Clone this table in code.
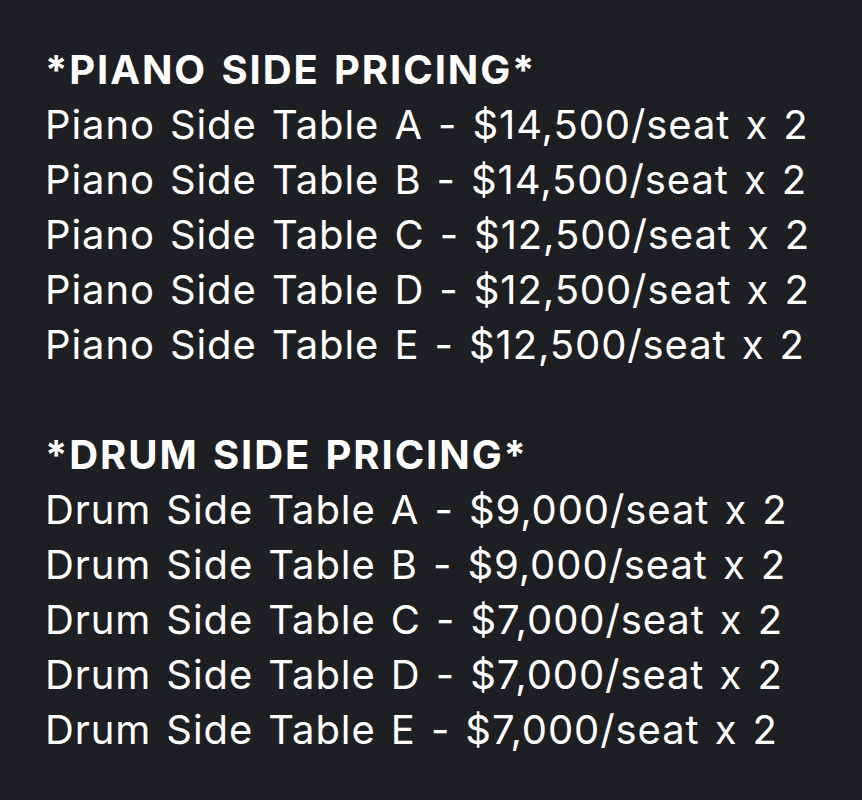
const piano = [
  "Piano Side Table A - $14,500/seat x 2",
  "Piano Side Table B - $14,500/seat x 2",
  "Piano Side Table C - $12,500/seat x 2",
  "Piano Side Table D - $12,500/seat x 2",
  "Piano Side Table E - $12,500/seat x 2",
];

const drum = [
  "Drum Side Table A - $9,000/seat x 2",
  "Drum Side Table B - $9,000/seat x 2",
  "Drum Side Table C - $7,000/seat x 2",
  "Drum Side Table D - $7,000/seat x 2",
  "Drum Side Table E - $7,000/seat x 2",
];

export default function App() {
  return (
    <div className="w-[862px] h-[800px] bg-[#1e1f23] text-white pl-[45px] pt-[42px] font-['Inter',sans-serif] text-[40px] leading-[55px] tracking-[0.9px] [word-spacing:3px]">
      <p className="font-bold tracking-[1.9px]">*PIANO SIDE PRICING*</p>
      {piano.map((line) => (
        <p key={line}>{line}</p>
      ))}
      <p>&nbsp;</p>
      <p className="font-bold tracking-[1.9px]">*DRUM SIDE PRICING*</p>
      {drum.map((line) => (
        <p key={line}>{line}</p>
      ))}
    </div>
  );
}
